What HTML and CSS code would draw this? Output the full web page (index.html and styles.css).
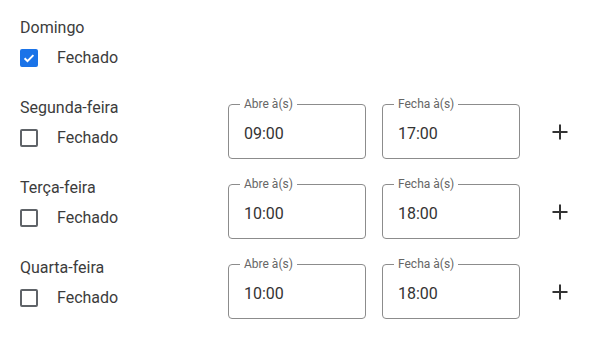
FILE: index.html
```html
<!DOCTYPE html>
<html>
<head>
  <title>Horário de funcionamento</title>
  <link rel="stylesheet" href="styles.css">
</head>
<body>
  <div class="schedule">
    <div class="day">
      <div class="day-info">
        <div class="day-name">Domingo</div>
        <label class="closed">
          <span class="box checked">
            <svg width="14" height="14" viewBox="0 0 14 14"><path d="M2.6 7.2l2.9 2.9 5.9-6" fill="none" stroke="#fff" stroke-width="2"/></svg>
          </span>
          Fechado
        </label>
      </div>
    </div>

    <div class="day">
      <div class="day-info">
        <div class="day-name">Segunda-feira</div>
        <label class="closed"><span class="box"></span>Fechado</label>
      </div>
      <div class="field"><span class="field-label">Abre à(s)</span>09:00</div>
      <div class="field"><span class="field-label">Fecha à(s)</span>17:00</div>
      <button class="add"><svg width="18" height="18" viewBox="0 0 18 18"><path d="M9 1.5v15M1.5 9h15" stroke="#333" stroke-width="2"/></svg></button>
    </div>

    <div class="day">
      <div class="day-info">
        <div class="day-name">Terça-feira</div>
        <label class="closed"><span class="box"></span>Fechado</label>
      </div>
      <div class="field"><span class="field-label">Abre à(s)</span>10:00</div>
      <div class="field"><span class="field-label">Fecha à(s)</span>18:00</div>
      <button class="add"><svg width="18" height="18" viewBox="0 0 18 18"><path d="M9 1.5v15M1.5 9h15" stroke="#333" stroke-width="2"/></svg></button>
    </div>

    <div class="day">
      <div class="day-info">
        <div class="day-name">Quarta-feira</div>
        <label class="closed"><span class="box"></span>Fechado</label>
      </div>
      <div class="field"><span class="field-label">Abre à(s)</span>10:00</div>
      <div class="field"><span class="field-label">Fecha à(s)</span>18:00</div>
      <button class="add"><svg width="18" height="18" viewBox="0 0 18 18"><path d="M9 1.5v15M1.5 9h15" stroke="#333" stroke-width="2"/></svg></button>
    </div>
  </div>
</body>
</html>
```

FILE: styles.css
```css
body { margin: 0; background: #fff; font-family: Roboto, "Liberation Sans", sans-serif; color: #3c3c3c; }
.schedule { padding: 16px 0 0 20px; }
.day { display: flex; align-items: flex-start; height: 80px; }
.day-info { width: 208px; flex-shrink: 0; }
.day-name { font-size: 16px; line-height: 24px; height: 24px; margin-bottom: 9px; }
.closed { display: flex; align-items: center; font-size: 16px; height: 18px; line-height: 18px; }
.box { width: 18px; height: 18px; box-sizing: border-box; border: 2px solid #5f6368; border-radius: 2px; margin-right: 19px; display: flex; align-items: center; justify-content: center; }
.box.checked { background: #1a73e8; border-color: #1a73e8; }
.field { position: relative; flex-shrink: 0; box-sizing: border-box; width: 138px; height: 55px; margin-top: 8px; margin-right: 16px; padding: 17px 15px 0 15px; border: 1px solid #8c8c8c; border-radius: 4px; font-size: 16px; line-height: 24px; color: #333; }
.field + .field { margin-right: 0; }
.field-label { position: absolute; top: -8px; left: 11px; padding: 0 4px; background: #fff; font-size: 12px; line-height: 14px; color: #666; }
.add { flex-shrink: 0; margin: 24px 0 0 28px; padding: 0; width: 24px; height: 24px; border: none; background: none; display: flex; align-items: center; justify-content: center; }
```
